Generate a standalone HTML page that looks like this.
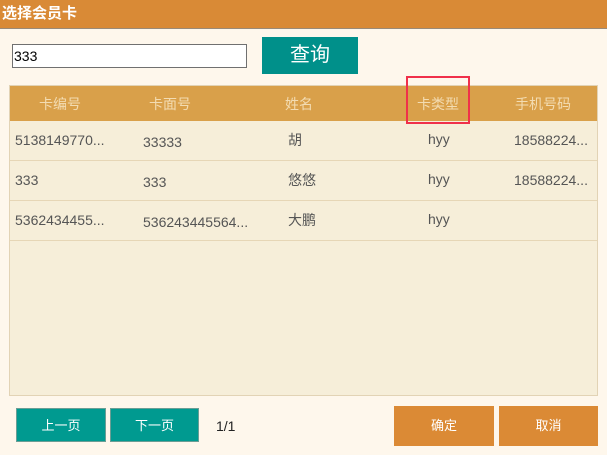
<!DOCTYPE html>
<html><head><meta charset="utf-8"><style>
*{margin:0;padding:0;box-sizing:border-box}
body{width:607px;height:455px;background:#fef7ec;font-family:"Liberation Sans","Noto Sans CJK SC",sans-serif;position:relative;overflow:hidden}
.a{position:absolute}
.title{left:0;top:0;width:607px;height:29px;background:#d98a36;border-bottom:1px solid #9a8a78;color:#fff;font-size:15px;font-weight:bold;line-height:28px;padding-left:2px}
.inp{left:12px;top:44px;width:235px;height:24px;border:1px solid #707070;background:#fff;font-size:14px;line-height:22px;padding-left:1px}
.q{left:262px;top:37px;width:96px;height:37px;background:#00908a;color:#fff;font-size:20px;text-align:center;line-height:36px}
.tbl{left:9px;top:85px;width:589px;height:311px;background:#f6eed9;border:1px solid #e2d3b5}
.hd{left:0;top:0;width:587px;height:35px;background:#d9a04a}
.ht{color:#f3dcb2;font-size:14px;top:8px}
.row{left:0;width:587px;height:40px;border-bottom:1px solid #e6d6b6}
.c{font-size:14px;color:#555;top:11px}
.btn{color:#fff;font-size:13px;text-align:center}
.teal{background:#009a90;border:1px solid #6a9e95}
.or{background:#db8a35}
</style></head><body>
<div class="a title">选择会员卡</div>
<div class="a inp">333</div>
<div class="a q">查询</div>
<div class="a tbl">
 <div class="a hd">
  <span class="a ht" style="left:29px">卡编号</span>
  <span class="a ht" style="left:139px">卡面号</span>
  <span class="a ht" style="left:275px">姓名</span>
  <span class="a ht" style="left:407px">卡类型</span>
  <span class="a ht" style="left:505px">手机号码</span>
 </div>
 <div class="a row" style="top:35px">
  <span class="a c" style="left:5px">5138149770...</span><span class="a c" style="left:133px;top:13px">33333</span><span class="a c" style="left:278px;top:9px">胡</span><span class="a c" style="left:418px;top:10px">hyy</span><span class="a c" style="left:504px">18588224...</span>
 </div>
 <div class="a row" style="top:75px">
  <span class="a c" style="left:5px">333</span><span class="a c" style="left:133px;top:13px">333</span><span class="a c" style="left:278px;top:9px">悠悠</span><span class="a c" style="left:418px;top:10px">hyy</span><span class="a c" style="left:504px">18588224...</span>
 </div>
 <div class="a row" style="top:115px">
  <span class="a c" style="left:5px">5362434455...</span><span class="a c" style="left:133px;top:13px">536243445564...</span><span class="a c" style="left:278px;top:9px">大鹏</span><span class="a c" style="left:418px;top:10px">hyy</span>
 </div>
</div>
<div class="a" style="left:406px;top:76px;width:64px;height:48px;border:2px solid #f0304a"></div>
<div class="a btn teal" style="left:16px;top:408px;width:90px;height:34px;line-height:34px">上一页</div>
<div class="a btn teal" style="left:110px;top:408px;width:89px;height:34px;line-height:34px">下一页</div>
<div class="a" style="left:216px;top:418px;font-size:14px;color:#222">1/1</div>
<div class="a btn or" style="left:394px;top:406px;width:100px;height:40px;line-height:40px">确定</div>
<div class="a btn or" style="left:499px;top:406px;width:99px;height:40px;line-height:40px">取消</div>
</body></html>
